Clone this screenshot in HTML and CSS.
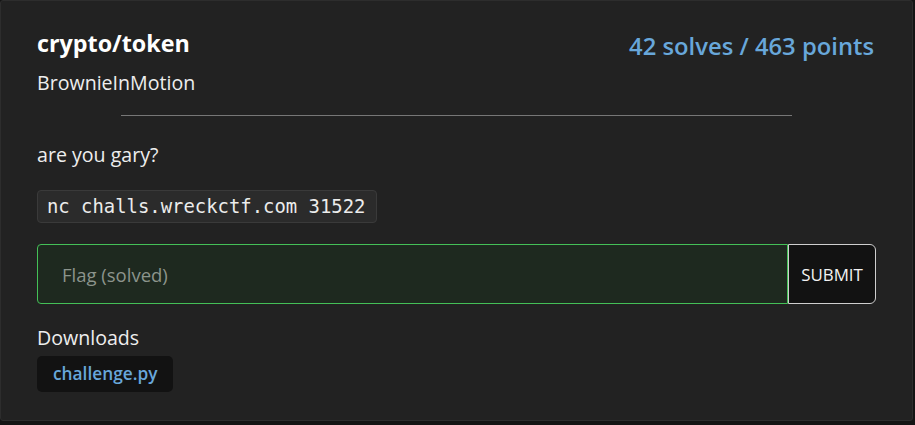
FILE: index.html
```html
<!DOCTYPE html>
<html>
<head>
<meta charset="utf-8">
<link rel="stylesheet" href="styles.css">
</head>
<body>
<div class="card">
  <div class="header">
    <div class="titles">
      <h1 class="title">crypto/token</h1>
      <div class="author">BrownieInMotion</div>
    </div>
    <div class="stats">42 solves / 463 points</div>
  </div>
  <hr class="sep">
  <p class="desc">are you gary?</p>
  <code class="cmd">nc challs.wreckctf.com 31522</code>
  <form class="flag">
    <input class="flag-input" type="text" placeholder="Flag (solved)">
    <button class="submit" type="button">SUBMIT</button>
  </form>
  <div class="downloads">
    <div class="dl-label">Downloads</div>
    <a class="dl-link" href="#">challenge.py</a>
  </div>
</div>
</body>
</html>
```
FILE: styles.css
```css
html, body {
  margin: 0;
  padding: 0;
  background: #141414;
}
body {
  font-family: "Open Sans", "Noto Sans", sans-serif;
  color: #eeeeee;
}
.card {
  box-sizing: border-box;
  width: 913px;
  height: 421px;
  background: #222222;
  border: 1px solid #2d2d2d;
  border-radius: 3px;
  padding: 27px 36px 0 36px;
  display: flex;
  flex-direction: column;
  align-items: flex-start;
}
.header {
  width: 100%;
  display: flex;
  justify-content: space-between;
  align-items: flex-start;
}
.title {
  margin: 0;
  font-size: 23.3px;
  font-weight: 700;
  color: #ffffff;
  line-height: 30px;
}
.author {
  margin-top: 12px;
  font-size: 19.6px;
  line-height: 26px;
  color: #eeeeee;
}
.stats {
  margin-top: 3px;
  margin-right: 2px;
  font-size: 23.8px;
  font-weight: 600;
  color: #68a7da;
  line-height: 30px;
}
.sep {
  align-self: center;
  width: 80%;
  border: none;
  border-top: 1px solid #777777;
  margin: 19px 0 0 0;
}
.desc {
  margin: 26px 0 0 0;
  font-size: 19.6px;
  line-height: 26px;
}
.cmd {
  margin-top: 22px;
  font-family: "DejaVu Sans Mono", "Liberation Mono", monospace;
  font-size: 18.9px;
  line-height: 23px;
  color: #ececec;
  background: #2b2b2b;
  border: 1px solid #3a3a3a;
  border-radius: 4px;
  padding: 4px 11px 4px 9px;
}
.flag {
  margin-top: 21px;
  width: 100%;
  display: flex;
  height: 60px;
}
.flag-input {
  flex: 1;
  box-sizing: border-box;
  height: 60px;
  margin: 0;
  background: #1e291f;
  border: 1px solid #44c057;
  border-radius: 4px 0 0 4px;
  padding: 0 24px;
  font-family: "Open Sans", "Noto Sans", sans-serif;
  font-size: 18.5px;
  color: #eeeeee;
  outline: none;
}
.flag-input::placeholder {
  color: #8c948c;
}
.submit {
  box-sizing: border-box;
  width: 88px;
  height: 60px;
  margin: 0;
  background: #121212;
  border: 1px solid #cfcfcf;
  border-radius: 0 6px 6px 0;
  color: #f2f2f2;
  font-family: "Open Sans", "Noto Sans", sans-serif;
  font-size: 16.9px;
  padding: 0;
}
.downloads {
  margin-top: 21px;
  display: flex;
  flex-direction: column;
  align-items: flex-start;
}
.dl-label {
  font-size: 19.6px;
  line-height: 26px;
  color: #eeeeee;
}
.dl-link {
  margin-top: 5px;
  display: block;
  background: #121212;
  border-radius: 5px;
  padding: 6px 16px 6px 16px;
  font-size: 17.3px;
  font-weight: 600;
  line-height: 24px;
  color: #68a7da;
  text-decoration: none;
}
```
